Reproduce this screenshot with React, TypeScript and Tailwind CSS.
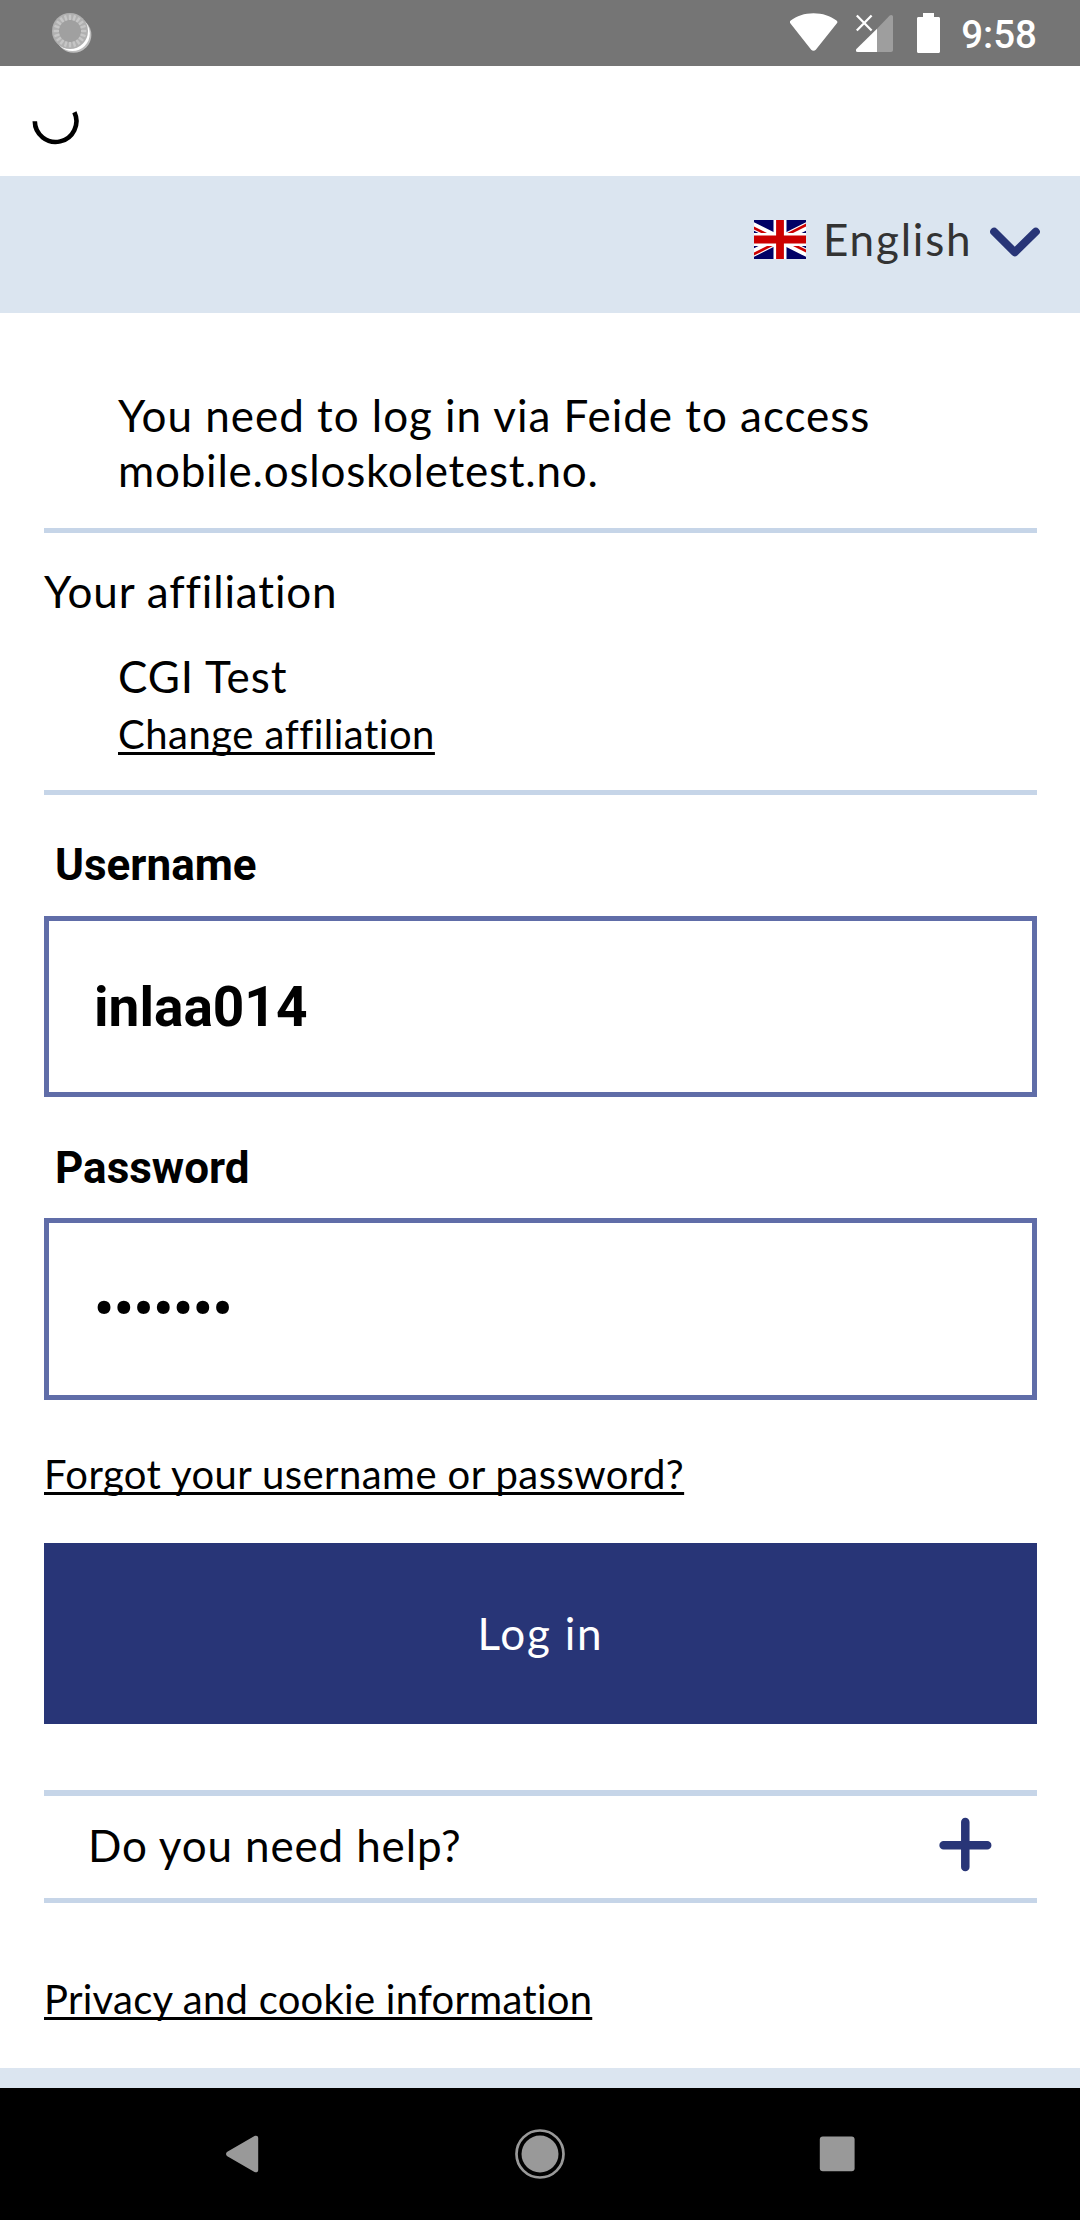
import type { ReactNode } from "react";

const TICKS = Array.from({ length: 20 }, (_, i) => i * 18);

function ProgressDot() {
  return (
    <svg className="mt-3 ml-[51px] h-[42px] w-[42px]" viewBox="51 12 42 42">
      <circle cx="73.6" cy="35" r="17.8" fill="#bdbdbd" />
      <circle cx="72.4" cy="33.6" r="17.4" fill="#fff" />
      <circle cx="70" cy="31" r="18" fill="#b0b0b0" />
      <circle cx="70" cy="31" r="11.5" fill="#a0a0a0" />
      {TICKS.map((a) => (
        <line
          key={a}
          x1="70"
          y1="14.6"
          x2="70"
          y2="20"
          stroke="#c6c6c6"
          strokeWidth="2.4"
          transform={`rotate(${a} 70 31)`}
        />
      ))}
    </svg>
  );
}

function StatusBar() {
  return (
    <div className="flex h-[66px] items-start bg-[#757575] text-white">
      <ProgressDot />
      <svg className="mt-[13px] ml-auto h-[38px] w-12" viewBox="789 13 48 38">
        <path
          d="M812.5 13.2c9 0 17 2.8 23 7.2 1 .8 1.2 1.9.4 2.9L814.8 49.700c-1.300 1.500-3.300 1.500-4.600 0L789.300 23.300c-.8-1-.6-2.100.4-2.900 6-4.400 13.800-7.200 22.800-7.200z"
          fill="#fff"
        />
      </svg>
      <svg className="mt-[13px] ml-[18px] h-10 w-[38px]" viewBox="855 13 38 40">
        <path d="M876 28.700 888.700 15.600c1.300-1.300 3.300-.6 3.300 1.200V50c0 1.200-.8 2-2 2h-14z" fill="#9e9e9e" />
        <path d="M876 28.700V52h-19.300c-1.800 0-2.500-1.700-1.300-3z" fill="#fff" />
        <path d="M855.800 15.500 870.600 30.500M870.600 15.500 855.800 30.500" stroke="#fff" strokeWidth="2.300" />
      </svg>
      <svg className="mt-[13px] ml-[23px] h-10 w-[23px]" viewBox="0 0 23 40">
        <path d="M6 0h11v4h4.500c.9 0 1.500.6 1.500 1.500v33c0 .9-.6 1.500-1.500 1.500h-20C.6 40 0 39.400 0 38.500v-33C0 4.600.6 4 1.500 4H6z" fill="#fff" />
      </svg>
      <span className="mt-3 mr-[43px] ml-[21px] font-['Roboto',sans-serif] text-[38.5px] leading-[46px] font-medium">
        9:58
      </span>
    </div>
  );
}

function Flag() {
  return (
    <svg className="mt-[9px] h-[39px] w-[52px]" viewBox="-85.333 0 682.667 512" preserveAspectRatio="none">
      <path fill="#006" d="M-256 0H768v512H-256z" />
      <path
        fill="#fff"
        d="M-256 0v57.244L653.535 512.012H768.02V454.77L-141.515 0zM768.02 0v57.243L-141.515 512.01H-256v-57.243L653.535 0z"
      />
      <path fill="#fff" d="M170.675 0v512.01h170.67V0zM-256 170.67v170.67H768.02V170.67z" />
      <path
        fill="#c00"
        d="M-256 204.804v102.402H768.02V204.804zM204.81 0v512.01h102.4V0zM-256 512.01 85.34 341.34h76.324l-341.34 170.67zM-256 0 85.34 170.67H9.016L-256 38.164zM350.356 170.67 691.696 0h76.324L426.68 170.67zM768.02 512.01 426.68 341.34h76.324L768.02 473.848z"
      />
    </svg>
  );
}

function LanguageBar() {
  return (
    <header className="flex h-[137px] items-start justify-end bg-[#dbe5f0] pt-[35px] pr-10">
      <Flag />
      <span className="ml-[17px] w-[167px] text-[44px] leading-[56px] tracking-[1.8px] text-[#333]">English</span>
      <svg className="mt-4 h-8 w-[50px]" viewBox="0 0 50 32" fill="none">
        <path d="M4.200 4.700 24.700 25.300 45.800 4.700" stroke="#283577" strokeWidth="8" strokeLinecap="round" strokeLinejoin="round" />
      </svg>
    </header>
  );
}

function Link({ children, className }: { children: ReactNode; className: string }) {
  return (
    <div className={className}>
      <a
        href="#"
        className="block text-[40px] leading-[48px] underline decoration-[3px] underline-offset-[3px] [text-decoration-skip-ink:none]"
      >
        {children}
      </a>
    </div>
  );
}

function Rule() {
  return <div className="h-[5px] bg-[#c6d5e8]" />;
}

function Label({ children }: { children: ReactNode }) {
  return <div className="ml-[11px] font-['Roboto',sans-serif] text-[44px] leading-[52px] font-bold">{children}</div>;
}

export default function App() {
  return (
    <div className="flex h-[2220px] w-[1080px] flex-col overflow-hidden bg-white font-['Lato',sans-serif] text-black">
      <StatusBar />
      <div className="h-[110px] pt-11 pl-8">
        <svg className="h-[38px] w-12" viewBox="32 110 48 38" fill="none">
          <path d="M34.800 121.300A20.800 20.800 0 1 0 74.400 112.200" stroke="#000" strokeWidth="4.600" />
        </svg>
      </div>
      <LanguageBar />

      <main className="flex-1 pr-[43px] pl-11">
        <div className="mb-[31px] pt-[74px] pl-[74px] text-[44px] leading-[56px] whitespace-nowrap">
          <div className="h-[55px] tracking-[0.97px]">You need to log in via Feide to access</div>
          <div className="h-[55px] tracking-[0.77px]">mobile.osloskoletest.no.</div>
        </div>
        <Rule />

        <h2 className="mt-[30px] text-[44px] leading-[56px] tracking-[0.86px]">Your affiliation</h2>
        <div className="mt-[29px] mb-8 pl-[74px]">
          <div className="text-[44px] leading-[56px] tracking-[0.95px]">CGI Test</div>
          <Link className="mt-1.5 w-fit tracking-[0.5px]">Change affiliation</Link>
        </div>
        <Rule />

        <div className="mt-11">
          <Label>Username</Label>
          <div className="mt-[25px] h-[181px] border-[5px] border-[#606da8] pt-[54px] pl-[45px] font-['Roboto',sans-serif] text-[55px] leading-[64px] font-bold">
            inlaa014
          </div>
        </div>
        <div className="mt-[45px]">
          <Label>Password</Label>
          <div className="mt-6 h-[182px] border-[5px] border-[#606da8] pt-[54px] pl-[45px] font-['Roboto',sans-serif] text-[55px] leading-[64px] font-bold">
            •••••••
          </div>
        </div>

        <Link className="mt-[50px] w-fit tracking-[0.42px]">Forgot your username or password?</Link>
        <button className="mt-[45px] block h-[181px] w-full bg-[#283577] pb-0.5 text-center text-[44px] leading-[56px] tracking-[1.8px] text-white">
          Log in
        </button>

        <div className="mt-[66px] flex h-[113px] items-start justify-between border-t-[6px] border-b-[5px] border-[#c6d5e8] pr-[45px] pl-11">
          <span className="mt-[21px] text-[44px] leading-[56px] tracking-[0.85px]">Do you need help?</span>
          <svg className="mt-[21px] h-[55px] w-[54px]" viewBox="938 1817 54 55" fill="none">
            <path d="M965.300 1822V1867M943.600 1845.300H987.200" stroke="#283577" strokeWidth="8.500" strokeLinecap="round" />
          </svg>
        </div>

        <Link className="mt-[72px] w-fit tracking-[0.25px]">Privacy and cookie information</Link>
      </main>

      <footer className="h-5 bg-[#dbe5f0]" />
      <nav className="h-[132px] bg-black">
        <svg className="h-[132px] w-[1080px]" viewBox="0 2088 1080 132" fill="#999">
          <path d="M254.500 2136.100 227.300 2151.800c-1.700 1.100-1.700 3.300 0 4.400L254.500 2171.900c1.900 1 3.700.2 3.700-1.900V2138c0-2.100-1.800-2.900-3.700-1.900z" />
          <circle cx="540" cy="2154" r="18.500" />
          <circle cx="540" cy="2154" r="23.500" fill="none" stroke="#999" strokeWidth="2.700" />
          <rect x="819.800" y="2136.500" width="34.800" height="34.800" rx="3" />
        </svg>
      </nav>
    </div>
  );
}
